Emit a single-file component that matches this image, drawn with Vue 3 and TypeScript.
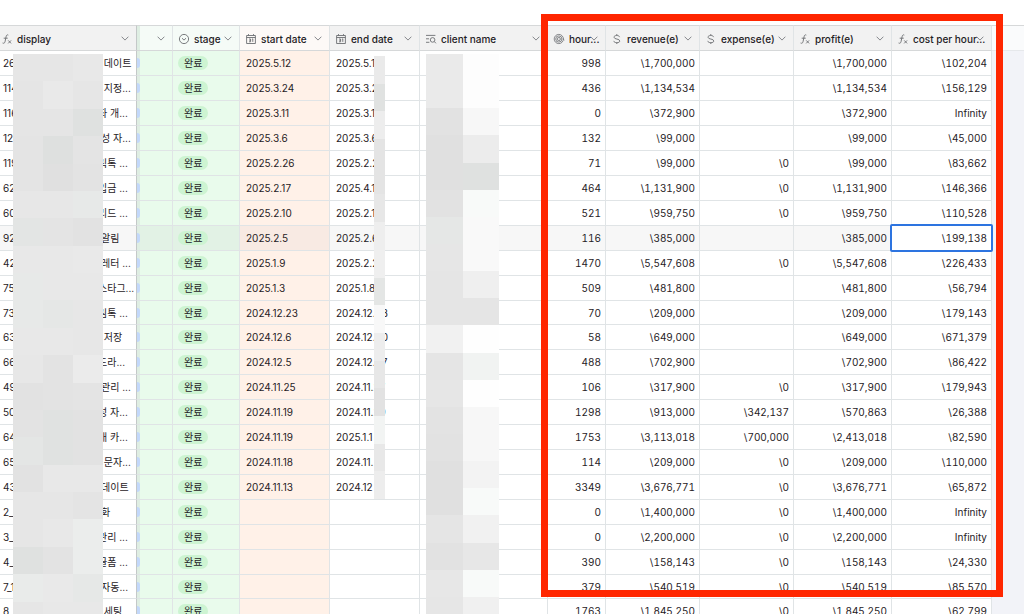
<script setup lang="ts">
type Icon = 'formula' | 'select' | 'date' | 'lookup' | 'rollup' | 'currency' | 'none'

interface Column {
  key: string
  title: string
  icon: Icon
}

interface Row {
  id: string
  tail: string
  cut?: boolean
  start: string
  end: string
  hours: string
  revenue: string
  expense: string
  profit: string
  cost: string
}

const columns: Column[] = [
  { key: 'display', title: 'display', icon: 'formula' },
  { key: 'tag', title: '', icon: 'none' },
  { key: 'stage', title: 'stage', icon: 'select' },
  { key: 'start', title: 'start date', icon: 'date' },
  { key: 'end', title: 'end date', icon: 'date' },
  { key: 'client', title: 'client name', icon: 'lookup' },
  { key: 'hours', title: 'hour...', icon: 'rollup' },
  { key: 'revenue', title: 'revenue(e)', icon: 'currency' },
  { key: 'expense', title: 'expense(e)', icon: 'currency' },
  { key: 'profit', title: 'profit(e)', icon: 'formula' },
  { key: 'cost', title: 'cost per hour...', icon: 'formula' },
]

const row = (
  id: string, tail: string, cut: boolean, start: string, end: string,
  hours: string, revenue: string, expense: string, profit: string, cost: string,
): Row => ({ id, tail, cut, start, end, hours, revenue, expense, profit, cost })

const rows: Row[] = [
  row('26', ' 데이트', false, '2025.5.12', '2025.5.1', '998', '\\1,700,000', '', '\\1,700,000', '\\102,204'),
  row('114', ' 지정...', false, '2025.3.24', '2025.3.2', '436', '\\1,134,534', '', '\\1,134,534', '\\156,129'),
  row('116', '좌 개...', true, '2025.3.11', '2025.3.1', '0', '\\372,900', '', '\\372,900', 'Infinity'),
  row('12', '성 자...', false, '2025.3.6', '2025.3.6', '132', '\\99,000', '', '\\99,000', '\\45,000'),
  row('119', '릭톡 ...', true, '2025.2.26', '2025.2.2', '71', '\\99,000', '\\0', '\\99,000', '\\83,662'),
  row('62', '입금 ...', true, '2025.2.17', '2025.4.1', '464', '\\1,131,900', '\\0', '\\1,131,900', '\\146,366'),
  row('60', '리드 ...', true, '2025.2.10', '2025.2.1', '521', '\\959,750', '\\0', '\\959,750', '\\110,528'),
  row('92', '알림', false, '2025.2.5', '2025.2.6', '116', '\\385,000', '', '\\385,000', '\\199,138'),
  row('42', '레터 ...', false, '2025.1.9', '2025.2.2', '1470', '\\5,547,608', '\\0', '\\5,547,608', '\\226,433'),
  row('75', '스타그...', true, '2025.1.3', '2025.1.8', '509', '\\481,800', '', '\\481,800', '\\56,794'),
  row('73', '림톡 ...', true, '2024.12.23', '2024.12.23', '70', '\\209,000', '', '\\209,000', '\\179,143'),
  row('63', ' 저장', false, '2024.12.6', '2024.12.20', '58', '\\649,000', '', '\\649,000', '\\671,379'),
  row('66', '드라...', true, '2024.12.5', '2024.12.27', '488', '\\702,900', '', '\\702,900', '\\86,422'),
  row('49', '관리 ...', false, '2024.11.25', '2024.11.27', '106', '\\317,900', '\\0', '\\317,900', '\\179,943'),
  row('50', '성 자...', true, '2024.11.19', '2024.11.29', '1298', '\\913,000', '\\342,137', '\\570,863', '\\26,388'),
  row('64', '매 카...', true, '2024.11.19', '2025.1.1', '1753', '\\3,113,018', '\\700,000', '\\2,413,018', '\\82,590'),
  row('65', ' 문자...', false, '2024.11.18', '2024.11.', '114', '\\209,000', '\\0', '\\209,000', '\\110,000'),
  row('43', '데이트', false, '2024.11.13', '2024.12', '3349', '\\3,676,771', '\\0', '\\3,676,771', '\\65,872'),
  row('2_', '화', false, '', '', '0', '\\1,400,000', '\\0', '\\1,400,000', 'Infinity'),
  row('3_', '관리 ...', true, '', '', '0', '\\2,200,000', '\\0', '\\2,200,000', 'Infinity'),
  row('4_', '글폼 ...', true, '', '', '390', '\\158,143', '\\0', '\\158,143', '\\24,330'),
  row('7_1', '자동...', false, '', '', '379', '\\540,519', '\\0', '\\540,519', '\\85,570'),
  row('8', ' 세팅', false, '', '', '1763', '\\1,845,250', '\\0', '\\1,845,250', '\\62,799'),
]

const activeRow = 7

const displayTiles = (
  'e6e6e6 e6e6e6 e8e8e8 e5e5e5 e9e9e9 e6e6e6 e5e5e5 e5e5e5 dfe1e0 e4e4e4 dee0df e4e4e4 ' +
  'e4e4e4 e0e0e0 e3e3e3 e7e7e7 e7e7e7 e7e9e8 e3e5e4 e4e4e4 e2e2e2 e8e8e8 e8e8e8 e9e9e9 ' +
  'e7e9e8 e8e8e8 e8e8e8 e7e9e8 e5e7e6 e7e7e7 e8e8e8 e8e8e8 e7e7e7 e7e7e7 e3e3e3 ebebeb ' +
  'e2e2e2 e3e3e3 e4e4e4 e3e3e3 e0e2e1 e2e2e2 e4e6e5 e0e2e1 e2e2e2 e2e2e2 e8e8e8 e8e8e8 ' +
  'e6e6e6 e6e6e6 e4e4e4 e6e6e6 e8e8e8 ebedec dfe1e0 e3e3e3 ebedec e9ebea e9e9e9 e6e8e7 ' +
  'e6e6e6 e8e8e8 e8e8e8'
).split(' ')

const endTiles = (
  'eaeaea e0e2e1 ededed e4e4e4 e4e4e4 e7e7e7 eeeeee efefef e4e6e5 f8f8f8 ededed e7e7e7 e2e2e2 f2f4f3 e8e8e8 ededed'
).split(' ')

const clientTiles = (
  'eaeaea fdfdfd eaeaea fdfdfd e2e2e2 f7f7f7 e0e0e0 ececec e0e0e0 dfe1e0 e2e2e2 f8faf9 ' +
  'e5e7e6 f9f9f9 e6e6e6 f9f9f9 e5e5e5 efefef e5e5e5 e5e5e5 f1f1f1 fefefe e5e5e5 f1f3f2 ' +
  'e6e6e6 fefefe e3e3e3 f7f7f7 e2e2e2 f7f7f7 e0e0e0 f3f3f3 e0e0e0 f8faf9 e5e5e5 f1f1f1 ' +
  'e2e2e2 e7e7e7 e7e7e7 f8faf9 e6e6e6 f0f0f0'
).split(' ')
</script>

<template>
  <main class="page">
    <table class="sheet">
      <colgroup>
        <col v-for="c in columns" :key="c.key" :class="'col-' + c.key" />
        <col />
      </colgroup>
      <thead>
        <tr>
          <th v-for="c in columns" :key="c.key" scope="col" :class="['h-' + c.key]">
            <div class="head">
              <svg v-if="c.icon === 'formula'" class="icon" viewBox="0 0 10 10" aria-hidden="true">
                <path d="M6.3 1.1C5.2.5 4.5 1 4.2 2.3L3 7.8C2.7 9.2 1.6 9.6.6 9M1.7 4.2h4M6.2 6.4l2.9 3M9.1 6.4l-2.9 3" />
              </svg>
              <svg v-else-if="c.icon === 'select'" class="icon" viewBox="0 0 10 10" aria-hidden="true">
                <circle cx="5" cy="5" r="4.6" />
                <path d="M3 4.2l2 1.9 2-1.9" />
              </svg>
              <svg v-else-if="c.icon === 'date'" class="icon" viewBox="0 0 10 10" aria-hidden="true">
                <path d="M.6 1.5h8.8v8H.6zM.6 3.5h8.8M2.5.1v1.4M7.5.1v1.4M3 5h1.6v2.8H3M3.4 6.4h1.2M6 5.2l.8-.3v3" />
              </svg>
              <svg v-else-if="c.icon === 'lookup'" class="icon" viewBox="0 0 10 10" aria-hidden="true">
                <path d="M0 1.4h9.4M0 4.8h3M0 8.3h3.4M8.4 7.6l1.5 1.7" />
                <circle cx="6.6" cy="5.9" r="2.3" />
              </svg>
              <svg v-else-if="c.icon === 'rollup'" class="icon fine" viewBox="0 0 10 10" aria-hidden="true">
                <circle cx="4.8" cy="5" r="4.6" />
                <circle cx="4.8" cy="5" r="3.1" />
                <circle cx="4.8" cy="5" r="1.6" />
                <path d="M4.8 4.8v.4M9.4 4.5c.1 1 .3 1.5.9 1.7" />
              </svg>
              <svg v-else-if="c.icon === 'currency'" class="icon" viewBox="0 0 10 10" aria-hidden="true">
                <path d="M7.6 3.1C7.3 2 6.3 1.5 4.7 1.5 3.1 1.5 2 2.1 2 3.2c0 2.5 5.8 1.2 5.8 3.8C7.8 8.1 6.6 8.7 4.9 8.7 3.2 8.7 2 8.1 1.7 6.9M4.8 0v1.5M4.8 8.7V10" />
              </svg>
              <span class="title">{{ c.title }}</span>
              <button class="menu" type="button" :aria-label="(c.title || 'field') + ' menu'">
                <svg viewBox="0 0 8 5" aria-hidden="true"><path d="M.6.7L4 4.1 7.4.7" /></svg>
              </button>
            </div>
          </th>
          <td class="rest"></td>
        </tr>
      </thead>
      <tbody>
        <tr v-for="(r, i) in rows" :key="i" :class="{ current: i === activeRow }">
          <td class="display">
            <div class="name">
              <span class="id">{{ r.id }}</span>
              <span :class="['tail', { cut: r.cut }]">{{ r.tail }}</span>
            </div>
          </td>
          <td class="green tag"><span class="chip"></span></td>
          <td class="green stage"><span class="pill">완료</span></td>
          <td class="orange date">{{ r.start }}</td>
          <td class="date">{{ r.end }}</td>
          <td></td>
          <td class="num">{{ r.hours }}</td>
          <td class="num">{{ r.revenue }}</td>
          <td class="num">{{ r.expense }}</td>
          <td class="num">{{ r.profit }}</td>
          <td :class="['num', { active: i === activeRow }]">{{ r.cost }}</td>
          <td class="rest"></td>
        </tr>
      </tbody>
    </table>

    <div class="mosaic on-display">
      <i v-for="(t, i) in displayTiles" :key="i" :style="{ background: '#' + t }"></i>
    </div>
    <div class="mosaic on-end">
      <i v-for="(t, i) in endTiles" :key="i" :style="{ background: '#' + t }"></i>
    </div>
    <div class="mosaic on-client">
      <i v-for="(t, i) in clientTiles" :key="i" :style="{ background: '#' + t }"></i>
    </div>
    <div class="frame"></div>
  </main>
</template>

<style>
body {
  margin: 0;
}
</style>

<style scoped>
.page {
  position: relative;
  box-sizing: border-box;
  height: 100vh;
  padding-top: 25px;
  overflow: hidden;
  background: #fff;
  color: #1f2125;
  font-family: Inter, "Noto Sans CJK KR", sans-serif;
  font-size: 10px;
  line-height: 14px;
}

.sheet {
  width: 100%;
  table-layout: fixed;
  border-collapse: separate;
  border-spacing: 0;
}

.col-display { width: 137px; }
.col-tag { width: 36px; }
.col-stage { width: 67px; }
.col-start,
.col-end { width: 90px; }
.col-client { width: 128px; }
.col-hours { width: 58px; }
.col-revenue,
.col-expense { width: 94px; }
.col-profit { width: 98px; }
.col-cost { width: 100px; }

th,
td {
  box-sizing: border-box;
  height: 25px;
  padding: 0;
  border-right: 1px solid #e0e4e6;
  border-bottom: 1px solid #e0e4e6;
  white-space: nowrap;
  font-weight: 400;
}

tbody tr:nth-child(11n) td {
  height: 24px;
}

thead th,
thead td {
  height: 26px;
  border-top: 1px solid #d6d8d9;
  border-bottom-color: #d6d8d9;
  background: #f2f2f2;
}

thead .h-tag,
thead .h-stage { background: #f5fbf7; }
thead .h-start { background: #fdf9f7; }

.head {
  display: flex;
  align-items: center;
  gap: 5px;
  padding: 1px 7px 0 6px;
  font-weight: 500;
}

.h-display .head {
  padding-left: 2px;
}

.icon {
  flex: none;
  width: 10px;
  height: 10px;
  fill: none;
  stroke: #6c6e72;
  stroke-width: 0.9;
  overflow: visible;
}

.icon.fine {
  stroke-width: 0.8;
}

.title {
  flex: 1;
  min-width: 0;
  text-align: left;
}

.menu {
  display: flex;
  flex: none;
  width: 8px;
  padding: 0;
  border: 0;
  background: none;
}

.menu svg {
  width: 8px;
  height: 5px;
  fill: none;
  stroke: #85878b;
  stroke-width: 1;
}

.display,
.h-display {
  border-right-color: #c4c8c8;
}

.name {
  display: flex;
  padding-left: 3px;
}

.id {
  flex: none;
  width: 98px;
}

.tail {
  white-space: pre;
}

.tail.cut {
  margin-left: -3px;
}

.green { background: #e9fbec; }
.orange { background: #fff1e8; }

.tag,
.h-tag {
  box-shadow: inset 3px 0 0 #dfeee3;
}

.chip {
  display: block;
  width: 3px;
  height: 10px;
  border-radius: 0 5px 5px 0;
  background: #c3d8fa;
}

.stage {
  padding-left: 5px;
}

.pill {
  display: block;
  width: fit-content;
  padding: 0 6px;
  border-radius: 7px;
  background: #cdf4d2;
}

.date {
  padding-left: 6px;
}

.num {
  padding-right: 4px;
  text-align: right;
  font-variant-numeric: tabular-nums;
}

.current td { background: #f7f7f7; }
.current .green { background: #e2f2e5; }
.current .orange { background: #f8eae3; }

.current .active {
  position: relative;
  background: #fff;
}

.active::after {
  content: "";
  position: absolute;
  inset: -2px;
  border: 2px solid #2d74e0;
  border-radius: 2px;
}

.rest,
.current .rest {
  border-right: 0;
  border-bottom: 0;
  background: #f2f3f8;
}

thead .rest {
  border-bottom: 1px solid #e6e8eb;
  background: #fafbfc;
}

.mosaic {
  position: absolute;
  display: grid;
  grid-auto-rows: 1fr;
}

.on-display {
  top: 54px;
  left: 13px;
  width: 90px;
  height: 575px;
  grid-template-columns: repeat(3, 1fr);
}

.on-end {
  top: 56px;
  left: 374px;
  width: 11px;
  height: 443px;
}

.on-client {
  top: 54px;
  left: 426px;
  width: 73px;
  height: 570px;
  grid-template-columns: repeat(2, 1fr);
}

.frame {
  position: absolute;
  top: 14px;
  left: 541px;
  box-sizing: border-box;
  width: 462px;
  height: 583px;
  border: 7px solid #ff2600;
}
</style>
